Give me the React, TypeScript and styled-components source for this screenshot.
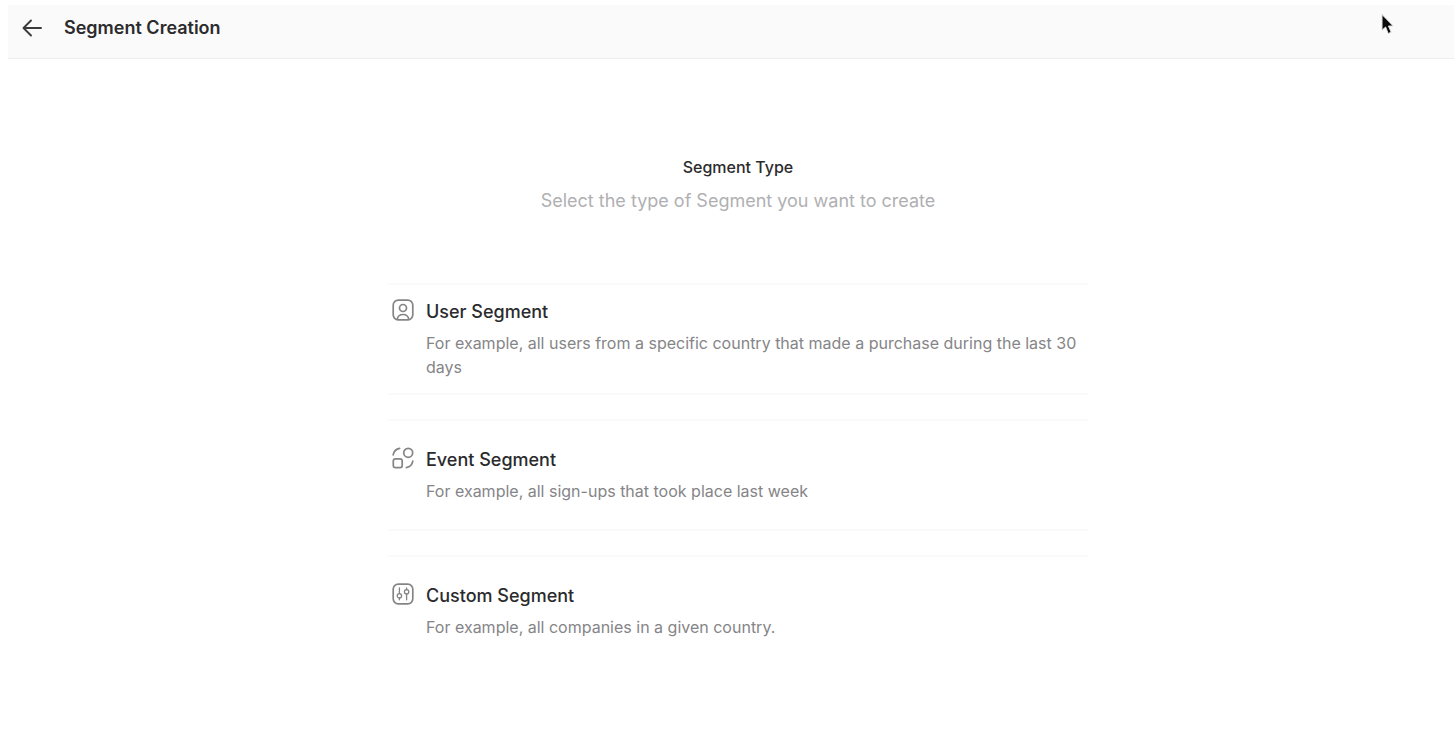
import React from "react";
import styled, { createGlobalStyle } from "styled-components";

const GlobalStyle = createGlobalStyle`
  *, *::before, *::after { box-sizing: border-box; }
  body {
    margin: 0;
    background: #ffffff;
    font-family: Inter, "Liberation Sans", sans-serif;
    color: #2b2b2d;
  }
`;

const Page = styled.div`
  position: relative;
  padding: 5px 0 0 8px;
`;

const Header = styled.header`
  display: flex;
  align-items: center;
  gap: 20px;
  height: 54px;
  padding: 0 12px 8px;
  background: #fafafa;
  border-bottom: 1px solid #ececef;
`;

const BackButton = styled.button`
  display: flex;
  padding: 0;
  border: 0;
  background: none;
  color: #3a3a3c;
  cursor: pointer;
`;

const PageTitle = styled.h1`
  margin: 0;
  font-size: 18px;
  line-height: 24px;
  font-weight: 600;
`;

const Main = styled.main`
  display: flex;
  flex-direction: column;
  align-items: center;
  padding: 96px 0 64px 14px;
`;

const Intro = styled.div`
  display: flex;
  flex-direction: column;
  gap: 8px;
  align-items: center;
  margin-bottom: 68px;
  text-align: center;
`;

const IntroTitle = styled.h2`
  margin: 0;
  font-size: 16px;
  line-height: 24px;
  font-weight: 500;
`;

const IntroText = styled.p`
  margin: 0;
  font-size: 18px;
  line-height: 28px;
  color: #b0b0b2;
`;

const OptionList = styled.div`
  display: flex;
  flex-direction: column;
  gap: 24px;
  width: 100%;
  max-width: 700px;
`;

const OptionCard = styled.button`
  display: flex;
  align-items: center;
  width: 100%;
  height: 112px;
  padding: 0 4px;
  border: 0;
  border-top: 2px solid #fafafb;
  border-bottom: 2px solid #fafafb;
  background: #ffffff;
  color: inherit;
  font-family: inherit;
  text-align: left;
  cursor: pointer;

  &:last-child { border-bottom-color: transparent; }
`;

const OptionBody = styled.span`
  display: grid;
  grid-template-columns: 22px 1fr;
  column-gap: 12px;
  row-gap: 6px;
`;

const OptionIcon = styled.svg`
  width: 22px;
  height: 22px;
  fill: none;
  stroke: #858587;
  stroke-width: 1.7;
  stroke-linecap: round;
  stroke-linejoin: round;
`;

const OptionTitle = styled.span`
  font-size: 18px;
  line-height: 26px;
  font-weight: 500;
`;

const OptionText = styled.span`
  grid-column: 2;
  font-size: 16px;
  line-height: 24px;
  color: #858587;
`;

const Pointer = styled.svg`
  position: absolute;
  top: 13px;
  right: 60px;
  width: 14px;
  height: 24px;
  pointer-events: none;
`;

const UserIcon = () => (
  <OptionIcon viewBox="0 0 22 22" aria-hidden="true">
    <rect x="1.2" y="1.2" width="19.6" height="19.6" rx="5" />
    <circle cx="11" cy="9" r="3.5" />
    <path d="M5.2 20.4c.5-3.2 2.900-4.900 5.800-4.900s5.300 1.700 5.800 4.900" />
  </OptionIcon>
);

const EventIcon = () => (
  <OptionIcon viewBox="0 0 22 22" aria-hidden="true">
    <circle cx="16.200" cy="5.800" r="4.500" />
    <rect x="1.300" y="11.800" width="8.900" height="8.900" rx="2.200" />
    <path d="M1.200 7.800C1.800 4.300 4.200 1.900 7.600 1.300" />
    <path d="M20.800 14.200c-.6 3.500-3 5.900-6.400 6.500" />
  </OptionIcon>
);

const CustomIcon = () => (
  <OptionIcon viewBox="0 0 22 22" aria-hidden="true">
    <rect x="1.200" y="1.200" width="19.600" height="19.600" rx="5" />
    <g strokeWidth="1.300">
      <circle cx="7.400" cy="12.800" r="2.200" />
      <path d="M7.400 5v5.600M7.400 15v1.800" />
      <circle cx="14.600" cy="8.800" r="2.200" />
      <path d="M14.600 5v1.600M14.600 11v5.800" />
    </g>
  </OptionIcon>
);

const options = [
  {
    title: "User Segment",
    text: "For example, all users from a specific country that made a purchase during the last 30 days",
    Icon: UserIcon,
  },
  {
    title: "Event Segment",
    text: "For example, all sign-ups that took place last week",
    Icon: EventIcon,
  },
  {
    title: "Custom Segment",
    text: "For example, all companies in a given country.",
    Icon: CustomIcon,
  },
];

export default function App() {
  return (
    <>
      <GlobalStyle />
      <Page>
        <Header>
          <BackButton type="button" aria-label="Back">
            <svg width="24" height="24" viewBox="0 0 24 24" fill="none" stroke="currentColor" strokeWidth="1.9" strokeLinecap="round" strokeLinejoin="round" aria-hidden="true">
              <path d="M21 12H3.500M11 4.500L3.500 12l7.500 7.500" />
            </svg>
          </BackButton>
          <PageTitle>Segment Creation</PageTitle>
        </Header>
        <Main>
          <Intro>
            <IntroTitle>Segment Type</IntroTitle>
            <IntroText>Select the type of Segment you want to create</IntroText>
          </Intro>
          <OptionList>
            {options.map(({ title, text, Icon }) => (
              <OptionCard type="button" key={title}>
                <OptionBody>
                  <Icon />
                  <OptionTitle>{title}</OptionTitle>
                  <OptionText>{text}</OptionText>
                </OptionBody>
              </OptionCard>
            ))}
          </OptionList>
        </Main>
        <Pointer viewBox="0 0 14 24" aria-hidden="true">
          <path d="M2 1.500v15.800l3.600-3.300 2.600 6.500 3-1.200-2.700-6.300h4.700z" fill="#0a0a0a" stroke="#e4e4e4" strokeWidth="1" strokeLinejoin="round" />
        </Pointer>
      </Page>
    </>
  );
}
